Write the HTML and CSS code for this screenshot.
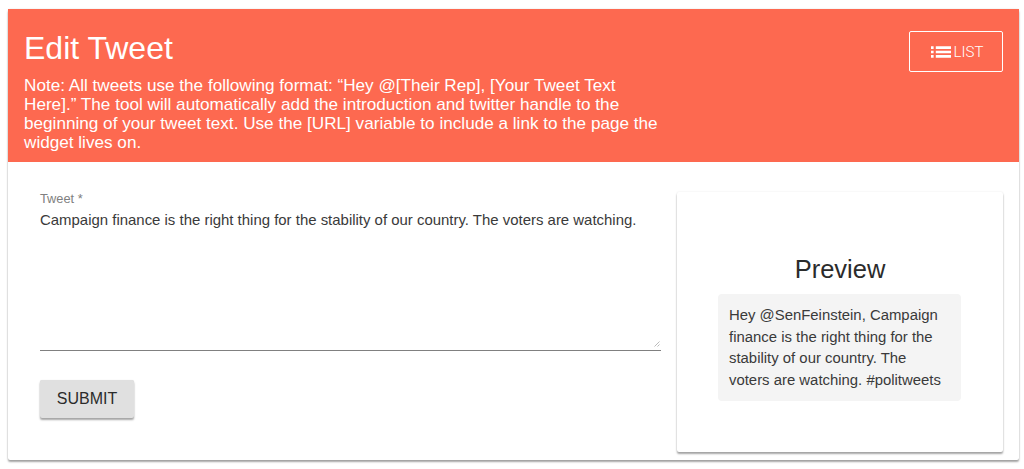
FILE: index.html
```html
<!DOCTYPE html>
<html lang="en">
<head>
<meta charset="utf-8">
<title>Edit Tweet</title>
<link rel="stylesheet" href="styles.css">
</head>
<body>
<main class="card">
  <header class="header">
    <div class="header-text">
      <h1 class="title">Edit Tweet</h1>
      <p class="note">Note: All tweets use the following format: “Hey @[Their Rep], [Your Tweet Text Here].” The tool will automatically add the introduction and twitter handle to the beginning of your tweet text. Use the [URL] variable to include a link to the page the widget lives on.</p>
    </div>
    <a class="list-btn" href="#">
      <svg class="list-icon" viewBox="0 0 20 14" width="20" height="14" aria-hidden="true"><path fill="#fff" d="M0 1.300h2.600v2.600H0zM0 5.700h2.600v2.600H0zM0 10.100h2.600v2.600H0zM4.800 1.300H20v2.600H4.800zM4.800 5.700H20v2.600H4.800zM4.800 10.100H20v2.600H4.800z"/></svg>
      <span>LIST</span>
    </a>
  </header>
  <div class="body">
    <form class="form">
      <label class="label">Tweet *</label>
      <div class="field">
        <div class="field-text">Campaign finance is the right thing for the stability of our country. The voters are watching.</div>
        <svg class="grip" viewBox="0 0 6 6" width="6" height="6" aria-hidden="true"><path stroke="#aaa" stroke-width="0.8" fill="none" d="M0.500 5.500L5.500 0.500M3.500 5.500L5.500 3.500"/></svg>
      </div>
      <button class="submit" type="button">SUBMIT</button>
    </form>
    <aside class="preview">
      <h2 class="preview-title">Preview</h2>
      <div class="bubble">Hey @SenFeinstein, Campaign finance is the right thing for the stability of our country. The voters are watching. #politweets</div>
    </aside>
  </div>
</main>
</body>
</html>
```
FILE: styles.css
```css
* { box-sizing: border-box; }
html, body { height: 100%; }
body {
  margin: 0;
  padding: 9px 5px 0 8px;
  background: #fff;
  font-family: "Liberation Sans", Arial, sans-serif;
  overflow: hidden;
}
.card {
  width: 1011px;
  height: 451px;
  background: #fff;
  border-radius: 2px;
  box-shadow: 0 2px 2px rgba(0,0,0,.35), 0 0 2px rgba(0,0,0,.12);
}
.header {
  height: 153px;
  background: #fd6950;
  color: #fff;
  display: flex;
  justify-content: space-between;
  align-items: flex-start;
  padding: 21px 16px 0 16px;
}
.header-text { width: 640px; }
.title {
  margin: 0;
  font-size: 32px;
  font-weight: 400;
  line-height: 36px;
}
.note {
  margin: 10px 0 0;
  font-size: 17.150px;
  line-height: 19px;
}
.list-btn {
  width: 94px;
  height: 41px;
  margin-top: 1px;
  padding-left: 2px;
  border: 1px solid #fff;
  border-radius: 2px;
  color: #fff;
  text-decoration: none;
  display: flex;
  align-items: center;
  justify-content: center;
  gap: 3px;
  font-family: Roboto, sans-serif;
  font-weight: 300;
  font-size: 15px;
}
.body {
  display: flex;
  align-items: flex-start;
  padding: 30px 16px 0 32px;
  gap: 16px;
}
.form { width: 621px; }
.label {
  display: block;
  font-size: 12.800px;
  line-height: 14px;
  color: #808080;
}
.field {
  position: relative;
  height: 145px;
  padding-top: 4px;
  border-bottom: 1px solid #808080;
}
.field-text {
  font-size: 14.950px;
  line-height: 20px;
  color: #3a3a3a;
}
.grip { position: absolute; right: 1px; bottom: 3px; }
.submit {
  display: block;
  margin-top: 29px;
  width: 94px;
  height: 38px;
  padding: 0;
  border: 0;
  border-radius: 2px;
  background: #e0e0e0;
  color: #2b2b2b;
  font-family: inherit;
  font-size: 16px;
  box-shadow: 0 2px 2px rgba(0,0,0,.35), 0 0 1px rgba(0,0,0,.12);
}
.preview {
  width: 326px;
  height: 260px;
  padding-top: 63px;
  border-radius: 2px;
  background: #fff;
  box-shadow: 0 2px 2px rgba(0,0,0,.35), 0 0 2px rgba(0,0,0,.1);
  display: flex;
  flex-direction: column;
  align-items: center;
}
.preview-title {
  margin: 0;
  font-size: 25.500px;
  font-weight: 400;
  line-height: 28px;
  color: #2b2b2b;
}
.bubble {
  align-self: flex-start;
  width: 243px;
  height: 107px;
  margin: 11px 0 0 41px;
  padding: 11px 11px 4px;
  border-radius: 4px;
  background: #f4f4f4;
  color: #3a3a3a;
  font-size: 14.900px;
  line-height: 21.500px;
}
```
